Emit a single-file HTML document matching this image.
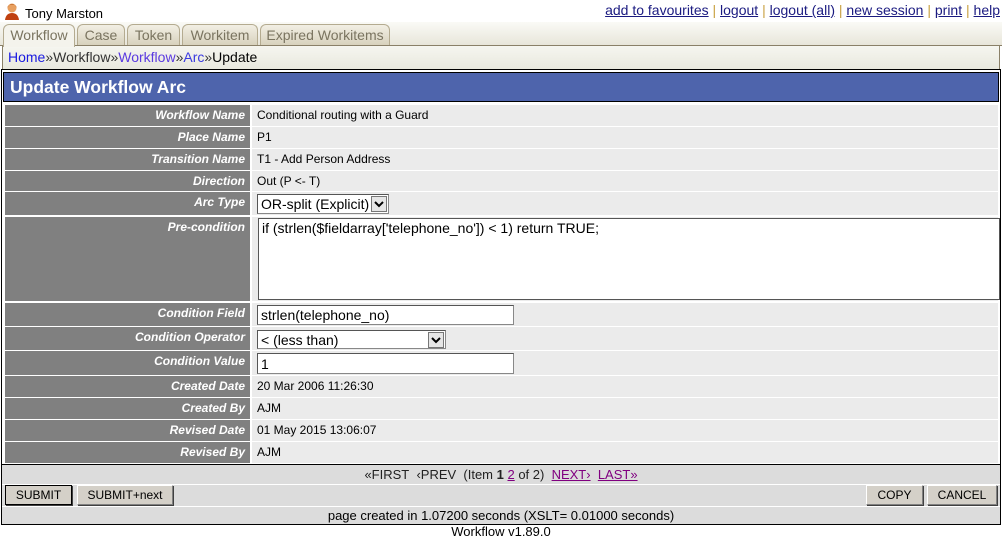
<!DOCTYPE html>
<html><head><style>
*{margin:0;padding:0;box-sizing:border-box}
body{width:1002px;height:538px;background:#fff;position:relative;overflow:hidden;font-family:"Liberation Sans",sans-serif;font-size:12px;color:#000}
.a{position:absolute}
.tab{position:absolute;top:24px;height:21px;background:linear-gradient(#f2efe4,#d8d2bd);border:1px solid #b4ab90;border-bottom:none;border-radius:6px 6px 0 0;color:#7a7460;font-size:14px;text-align:center;line-height:20px}
.lab{position:absolute;left:5px;width:245px;background:#808080;color:#fff;font:italic bold 12px "Liberation Sans",sans-serif;text-align:right;padding-right:5px;line-height:20px}
.val{position:absolute;left:252px;width:746px;background:#ebebeb;font:12px "Liberation Sans",sans-serif;padding-left:5px;line-height:20px}
.inp{position:absolute;background:#fff;border:1px solid #888;border-top-color:#555;border-left-color:#555;font-size:14px;padding-left:3px;line-height:18px;white-space:nowrap;overflow:hidden}
.sel .dd{position:absolute;right:1px;top:1px;width:16px;height:16px;background:#e6e6e6;border:1px solid #777}
.btn{position:absolute;top:485px;height:20px;background:#d4d0c8;border:1px solid #808080;border-top-color:#fff;border-left-color:#fff;box-shadow:1px 1px 0 #404040;font:12px "Liberation Sans",sans-serif;text-align:center;line-height:18px}
a{color:#1a1a80;text-decoration:underline}
</style></head><body>
<svg class="a" style="left:4px;top:2px" width="16" height="18" viewBox="0 0 16 18"><circle cx="8" cy="6" r="4.5" fill="#e8a060"/><path d="M3 6 Q8 -2 13 6 L12 4 Q8 1 4 4Z" fill="#b05010"/><path d="M1 18 Q2 11 8 11 Q14 11 15 18Z" fill="#c04010"/></svg>
<div class="a" style="left:25px;top:6px;font-size:13px">Tony Marston</div>
<div class="a" style="right:2px;top:2px;font-size:14px;color:#c8a040"><a>add to favourites</a> | <a>logout</a> | <a>logout (all)</a> | <a>new session</a> | <a>print</a> | <a>help</a></div>
<div class="a" style="left:0;top:22px;width:1002px;height:24px;background:linear-gradient(#fafaf6,#e8e6da);border-bottom:1px solid #8a8068"></div>
<div class="tab" style="left:3px;width:72px;height:23px;background:#f4f3ec;z-index:2">Workflow</div>
<div class="tab" style="left:77px;width:48px">Case</div>
<div class="tab" style="left:127px;width:53px">Token</div>
<div class="tab" style="left:182px;width:76px">Workitem</div>
<div class="tab" style="left:260px;width:130px">Expired Workitems</div>
<div class="a" style="left:2px;top:46px;width:998px;height:23px;background:linear-gradient(#f6f6f0,#e8e8de);border-left:1px solid #8a8068;border-right:1px solid #8a8068"></div>
<div class="a" style="left:8px;top:49px;font-size:14px;color:#333"><span style="color:#1a1ae0">Home</span>»Workflow»<span style="color:#5a3ae0">Workflow</span>»<span style="color:#3a3ae0">Arc</span>»<span style="color:#000">Update</span></div>
<div class="a" style="left:1px;top:69px;width:1000px;height:456px;border:1px solid #000;background:#fff"></div>
<div class="a" style="left:3px;top:72px;width:996px;height:30px;background:#4e64ac;border:1px solid #000;color:#fff;font-weight:bold;font-size:17.5px;line-height:29px;padding-left:6px">Update Workflow Arc</div>

<div class="lab" style="top:105px;height:21px">Workflow Name</div><div class="val" style="top:105px;height:21px">Conditional routing with a Guard</div>
<div class="lab" style="top:127px;height:21px">Place Name</div><div class="val" style="top:127px;height:21px">P1</div>
<div class="lab" style="top:149px;height:21px">Transition Name</div><div class="val" style="top:149px;height:21px">T1 - Add Person Address</div>
<div class="lab" style="top:171px;height:20px">Direction</div><div class="val" style="top:171px;height:20px">Out (P &lt;- T)</div>
<div class="lab" style="top:192px;height:23px">Arc Type</div><div class="val" style="top:192px;height:23px"></div>
<div class="inp sel" style="left:257px;top:194px;width:132px;height:20px">OR-split (Explicit)<div class="dd"><svg width="14" height="14"><path d="M3 5 L7 9 L11 5" stroke="#000" stroke-width="2" fill="none"/></svg></div></div>
<div class="lab" style="top:217px;height:84px">Pre-condition</div><div class="val" style="top:217px;height:84px"></div>
<div class="inp" style="left:258px;top:218px;width:742px;height:82px;line-height:18px;border-color:#555">if (strlen($fieldarray['telephone_no']) &lt; 1) return TRUE;</div>
<div class="lab" style="top:303px;height:23px">Condition Field</div><div class="val" style="top:303px;height:23px"></div>
<div class="inp" style="left:257px;top:305px;width:257px;height:20px">strlen(telephone_no)</div>
<div class="lab" style="top:327px;height:23px">Condition Operator</div><div class="val" style="top:327px;height:23px"></div>
<div class="inp sel" style="left:257px;top:330px;width:189px;height:19px">&lt; (less than)<div class="dd"><svg width="14" height="14"><path d="M3 5 L7 9 L11 5" stroke="#000" stroke-width="2" fill="none"/></svg></div></div>
<div class="lab" style="top:351px;height:24px">Condition Value</div><div class="val" style="top:351px;height:24px"></div>
<div class="inp" style="left:257px;top:353px;width:257px;height:21px;line-height:20px">1</div>
<div class="lab" style="top:376px;height:21px">Created Date</div><div class="val" style="top:376px;height:21px">20 Mar 2006 11:26:30</div>
<div class="lab" style="top:398px;height:21px">Created By</div><div class="val" style="top:398px;height:21px">AJM</div>
<div class="lab" style="top:420px;height:21px">Revised Date</div><div class="val" style="top:420px;height:21px">01 May 2015 13:06:07</div>
<div class="lab" style="top:442px;height:21px">Revised By</div><div class="val" style="top:442px;height:21px">AJM</div>
<div class="a" style="left:2px;top:464px;width:998px;height:1px;background:#000"></div>
<div class="a" style="left:2px;top:465px;width:998px;height:59px;background:#dcdcdc"></div>
<div class="a" style="left:2px;top:484px;width:998px;height:1px;background:#fff"></div>
<div class="a" style="left:2px;top:506px;width:998px;height:1px;background:#fff"></div>
<div class="a" style="left:0;width:1002px;top:467px;text-align:center;font:13px 'Liberation Sans',sans-serif;color:#222">«FIRST&nbsp; ‹PREV&nbsp; (Item <b>1</b> <a style="color:#800080">2</a> of 2)&nbsp; <a style="color:#800080">NEXT›</a>&nbsp; <a style="color:#800080">LAST»</a></div>
<div class="btn" style="left:5px;width:67px;border:1px solid #000">SUBMIT</div>
<div class="btn" style="left:77px;width:96px">SUBMIT+next</div>
<div class="btn" style="left:866px;width:57px">COPY</div>
<div class="btn" style="left:927px;width:70px">CANCEL</div>
<div class="a" style="left:0;width:1002px;top:508px;text-align:center;font:13px 'Liberation Sans',sans-serif">page created in 1.07200 seconds (XSLT= 0.01000 seconds)</div>
<div class="a" style="left:0;width:1002px;top:524px;text-align:center;font:13px 'Liberation Sans',sans-serif">Workflow v1.89.0</div>
</body></html>
